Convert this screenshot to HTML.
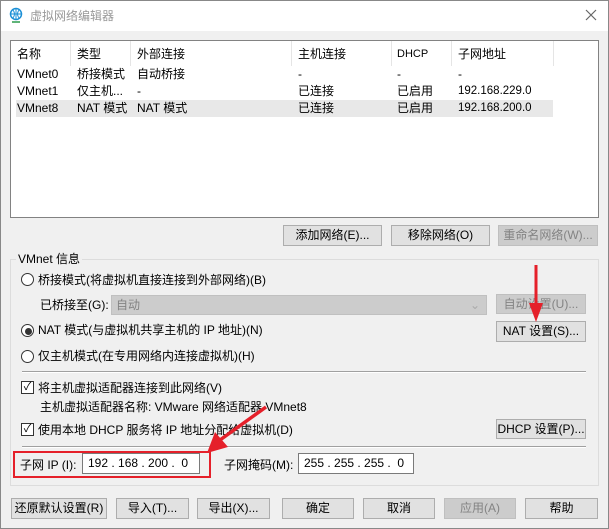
<!DOCTYPE html>
<html><head><meta charset="utf-8"><style>
*{margin:0;padding:0;box-sizing:border-box}
body{width:609px;height:529px;background:#f0f0f0;font-family:"Liberation Sans","Noto Sans CJK SC",sans-serif;font-size:12px;color:#000;position:relative;overflow:hidden}
.a{position:absolute;white-space:nowrap;line-height:16px}
.btn{position:absolute;background:#e1e1e1;border:1px solid #adadad;text-align:center;line-height:18px;font-size:12px}
.dis{background:#cccccc;border-color:#bfbfbf;color:#838383}
.radio{position:absolute;width:13px;height:13px;border:1px solid #333;border-radius:50%;background:#fff}
.chk{position:absolute;width:13px;height:13px;border:1px solid #333;background:#fff;font-size:11px;line-height:11px;text-align:center}
.in{position:absolute;background:#fff;border:1px solid #7a7a7a;height:21px;line-height:19px;padding-left:5px}
</style></head><body>
<div class="a" style="left:0;top:0;width:609px;height:31px;background:#fff;border:1px solid #888;border-bottom:none"></div>
<div class="a" style="left:0;top:0;width:609px;height:529px;border:1px solid #888"></div>
<svg class="a" style="left:9px;top:7px" width="14" height="16" viewBox="0 0 14 16"><circle cx="7" cy="7" r="5.5" fill="none" stroke="#1a8fd6" stroke-width="1.5"/><path d="M1.5 7h11M7 1.5v11M4 3q3 4 0 8M10 3q-3 4 0 8" stroke="#1a8fd6" fill="none"/><path d="M3 15h8" stroke="#2a9a4a" stroke-width="1.5"/></svg>
<div class="a" style="left:30px;top:8px;color:#999">虚拟网络编辑器</div>
<svg class="a" style="left:585px;top:9px" width="12" height="12"><path d="M1 1L11 11M11 1L1 11" stroke="#666" stroke-width="1.2"/></svg>

<div class="a" style="left:10px;top:40px;width:589px;height:178px;background:#fff;border:1px solid #828282"></div>
<div class="a" style="left:11px;top:41px;width:543px;height:25px;border-right:1px solid #e5e5e5"></div>
<div class="a" style="left:70px;top:41px;height:25px;border-left:1px solid #e5e5e5"></div>
<div class="a" style="left:130px;top:41px;height:25px;border-left:1px solid #e5e5e5"></div>
<div class="a" style="left:291px;top:41px;height:25px;border-left:1px solid #e5e5e5"></div>
<div class="a" style="left:391px;top:41px;height:25px;border-left:1px solid #e5e5e5"></div>
<div class="a" style="left:451px;top:41px;height:25px;border-left:1px solid #e5e5e5"></div>
<div class="a" style="left:16px;top:100px;width:537px;height:17px;background:#e8e8e8"></div>
<div class="a" style="left:17px;top:46px">名称</div><div class="a" style="left:77px;top:46px">类型</div><div class="a" style="left:137px;top:46px">外部连接</div><div class="a" style="left:298px;top:46px">主机连接</div><div class="a" style="left:397px;top:46px;font-size:11px">DHCP</div><div class="a" style="left:458px;top:46px">子网地址</div>
<div class="a" style="left:17px;top:66px">VMnet0</div><div class="a" style="left:77px;top:66px">桥接模式</div><div class="a" style="left:137px;top:66px">自动桥接</div><div class="a" style="left:298px;top:66px">-</div><div class="a" style="left:397px;top:66px">-</div><div class="a" style="left:458px;top:66px">-</div>
<div class="a" style="left:17px;top:83px">VMnet1</div><div class="a" style="left:77px;top:83px">仅主机...</div><div class="a" style="left:137px;top:83px">-</div><div class="a" style="left:298px;top:83px">已连接</div><div class="a" style="left:397px;top:83px">已启用</div><div class="a" style="left:458px;top:83px;font-size:11.5px">192.168.229.0</div>
<div class="a" style="left:17px;top:100px">VMnet8</div><div class="a" style="left:77px;top:100px">NAT 模式</div><div class="a" style="left:137px;top:100px">NAT 模式</div><div class="a" style="left:298px;top:100px">已连接</div><div class="a" style="left:397px;top:100px">已启用</div><div class="a" style="left:458px;top:100px;font-size:11.5px">192.168.200.0</div>

<div class="btn" style="left:283px;top:225px;width:99px;height:21px">添加网络(E)...</div>
<div class="btn" style="left:391px;top:225px;width:99px;height:21px">移除网络(O)</div>
<div class="btn dis" style="left:498px;top:225px;width:100px;height:21px">重命名网络(W)...</div>

<div class="a" style="left:10px;top:259px;width:589px;height:227px;border:1px solid #dcdcdc"></div>
<div class="a" style="left:16px;top:251px;background:#f0f0f0;padding:0 2px">VMnet 信息</div>
<div class="radio" style="left:21px;top:273px"></div><div class="a" style="left:38px;top:272px">桥接模式(将虚拟机直接连接到外部网络)(B)</div>
<div class="a" style="left:40px;top:297px">已桥接至(G):</div>
<div class="a" style="left:111px;top:295px;width:376px;height:20px;background:#cccccc;border:1px solid #c0c0c0;color:#838383;padding-left:4px;line-height:18px">自动<span style="position:absolute;right:6px;color:#aaa">⌄</span></div>
<div class="btn dis" style="left:496px;top:294px;width:90px;height:20px">自动设置(U)...</div>
<div class="radio" style="left:21px;top:324px"></div><div class="a" style="left:25px;top:328px;width:7px;height:7px;border-radius:50%;background:#333"></div><div class="a" style="left:38px;top:322px">NAT 模式(与虚拟机共享主机的 IP 地址)(N)</div>
<div class="btn" style="left:496px;top:321px;width:90px;height:21px">NAT 设置(S)...</div>
<div class="radio" style="left:21px;top:350px"></div><div class="a" style="left:38px;top:348px">仅主机模式(在专用网络内连接虚拟机)(H)</div>
<div class="a" style="left:22px;top:371px;width:564px;border-top:1px solid #a0a0a0;border-bottom:1px solid #fff"></div>
<div class="chk" style="left:21px;top:381px">✓</div><div class="a" style="left:38px;top:380px">将主机虚拟适配器连接到此网络(V)</div>
<div class="a" style="left:40px;top:399px">主机虚拟适配器名称: VMware 网络适配器 VMnet8</div>
<div class="chk" style="left:21px;top:423px">✓</div><div class="a" style="left:38px;top:422px">使用本地 DHCP 服务将 IP 地址分配给虚拟机(D)</div>
<div class="btn" style="left:496px;top:419px;width:90px;height:20px">DHCP 设置(P)...</div>
<div class="a" style="left:22px;top:446px;width:564px;border-top:1px solid #a0a0a0;border-bottom:1px solid #fff"></div>
<div class="a" style="left:20px;top:457px">子网 IP (I):</div>
<div class="in" style="left:82px;top:453px;width:118px">192 . 168 . 200 .&nbsp; 0</div>
<div class="a" style="left:13px;top:451px;width:198px;height:27px;border:2px solid #e5202a"></div>
<div class="a" style="left:224px;top:457px">子网掩码(M):</div>
<div class="in" style="left:298px;top:453px;width:116px">255 . 255 . 255 .&nbsp; 0</div>

<div class="btn" style="left:11px;top:498px;width:96px;height:21px">还原默认设置(R)</div>
<div class="btn" style="left:116px;top:498px;width:73px;height:21px">导入(T)...</div>
<div class="btn" style="left:197px;top:498px;width:73px;height:21px">导出(X)...</div>
<div class="btn" style="left:282px;top:498px;width:72px;height:21px">确定</div>
<div class="btn" style="left:363px;top:498px;width:72px;height:21px">取消</div>
<div class="btn dis" style="left:444px;top:498px;width:72px;height:21px">应用(A)</div>
<div class="btn" style="left:525px;top:498px;width:73px;height:21px">帮助</div>

<svg class="a" style="left:0;top:0" width="609" height="529"><path d="M536 265L536 308" stroke="#e5202a" stroke-width="3"/><path d="M529 303L543 303L536 322Z" fill="#e5202a"/><path d="M266 407L220 440" stroke="#e5202a" stroke-width="3.5"/><path d="M207 453L215 432L228 447Z" fill="#e5202a"/></svg>
</body></html>
